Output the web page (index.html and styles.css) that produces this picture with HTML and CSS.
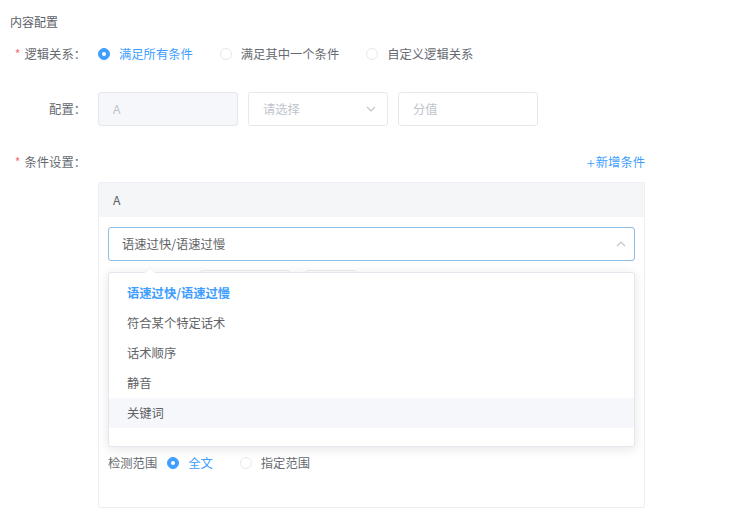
FILE: index.html
```html
<!DOCTYPE html>
<html lang="zh-CN">
<head>
<meta charset="utf-8">
<title>内容配置</title>
<link rel="stylesheet" href="styles.css">
</head>
<body>
<div class="page">
  <div class="title">内容配置</div>

  <div class="row r1">
    <div class="label"><span class="req">*</span>逻辑关系：</div>
    <div class="radios">
      <span class="radio checked"><span class="dot"></span>满足所有条件</span>
      <span class="radio"><span class="dot"></span>满足其中一个条件</span>
      <span class="radio"><span class="dot"></span>自定义逻辑关系</span>
    </div>
  </div>

  <div class="row r2">
    <div class="label">配置：</div>
    <div class="inputs">
      <div class="input disabled">A</div>
      <div class="input select">请选择
        <svg class="chev" viewBox="0 0 10 6" width="10" height="6"><path d="M1 1 L5 5 L9 1" fill="none" stroke="#c0c4cc" stroke-width="1.2"/></svg>
      </div>
      <div class="input">分值</div>
    </div>
  </div>

  <div class="row r3">
    <div class="label"><span class="req">*</span>条件设置：</div>
    <div class="cond">
      <div class="cond-head"><span class="add"><span class="plus">+</span>新增条件</span></div>
      <div class="card">
        <div class="card-head">A</div>
        <div class="card-body">
          <div class="sel-wrap">
            <div class="input select focus"><span class="val">语速过快/语速过慢</span>
              <svg class="chev" viewBox="0 0 10 6" width="10" height="6"><path d="M1 5 L5 1 L9 5" fill="none" stroke="#c0c4cc" stroke-width="1.2"/></svg>
            </div>
            <div class="dropdown">
              <span class="arrow"></span>
              <div class="opt selected">语速过快/语速过慢</div>
              <div class="opt">符合某个特定话术</div>
              <div class="opt">话术顺序</div>
              <div class="opt">静音</div>
              <div class="opt hover">关键词</div>
            </div>
          </div>
          <div class="hidden-row">
            <div class="ghost g1"></div>
            <div class="ghost g2"></div>
            <div class="ghost g3"></div>
          </div>
          <div class="scope">
            <span class="scope-label">检测范围</span>
            <span class="radio checked"><span class="dot"></span>全文</span>
            <span class="radio"><span class="dot"></span>指定范围</span>
          </div>
        </div>
      </div>
    </div>
  </div>
</div>
</body>
</html>
```

FILE: styles.css
```css
* { box-sizing: border-box; }
html, body { margin: 0; padding: 0; background: #fff; }
body {
  font-family: "Noto Sans CJK SC", "Noto Sans", "Liberation Sans", sans-serif;
  font-size: 12.3px;
  color: #666a70;
}
.page { padding: 14px 0 0 0; }
.title {
  padding-left: 10px;
  font-size: 12px;
  line-height: 16px;
  height: 16px;
  color: #5c6068;
}
.row { display: flex; align-items: flex-start; }
.label {
  width: 98px;
  flex: none;
  text-align: right;
  padding-right: 12px;
  height: 34px;
  line-height: 34px;
  color: #666a70;
}
.req { color: #f56c6c; margin-right: 4px; }
.r1 { margin-top: 7px; }
.r2 { margin-top: 21px; }
.r3 { margin-top: 19px; }

.radios { display: flex; align-items: center; height: 34px; }
.radio {
  display: inline-flex;
  align-items: center;
  margin-right: 27px;
  color: #666a70;
  white-space: nowrap;
}
.radio .dot {
  width: 12px;
  height: 12px;
  border-radius: 50%;
  border: 1px solid #e6e8ee;
  background: #fff;
  margin-right: 9px;
  position: relative;
  flex: none;
}
.radio.checked { color: #409eff; }
.radio.checked .dot { background: #409eff; border-color: #409eff; }
.radio.checked .dot::after {
  content: "";
  position: absolute;
  left: 50%; top: 50%;
  width: 4px; height: 4px;
  margin: -2px 0 0 -2px;
  border-radius: 50%;
  background: #fff;
}

.inputs { display: flex; gap: 10px; }
.input {
  width: 140px;
  height: 34px;
  border: 1px solid #e6e8ee;
  border-radius: 3px;
  padding: 0 14px;
  line-height: 32px;
  color: #c0c4cc;
  background: #fff;
  display: flex;
  align-items: center;
}
.input.disabled { background: #f5f7fa; color: #c0c4cc; }
.input.select { justify-content: space-between; padding-right: 11px; }

.cond { width: 547px; }
.cond-head {
  height: 34px;
  display: flex;
  justify-content: flex-end;
  align-items: center;
}
.add { color: #409eff; display: inline-flex; align-items: center; }
.plus { font-size: 15px; font-weight: 300; margin-right: 1px; line-height: 1; }

.card {
  margin-top: 3px;
  border: 1px solid #ebeef5;
  border-radius: 2px;
  height: 326px;
}
.card-head {
  height: 34px;
  background: #f5f6f8;
  line-height: 34px;
  padding-left: 14px;
  color: #606266;
}
.card-body { padding: 10px 9px 0 9px; }
.sel-wrap { position: relative; }
.input.focus {
  width: 527px;
  border-color: #8fbde3;
  color: #606266;
  padding-left: 13px;
  padding-right: 8px;
}
.dropdown {
  position: absolute;
  left: 0;
  top: calc(100% + 11px);
  width: 527px;
  height: 175px;
  background: #fff;
  border: 1px solid #e4e7ed;
  border-radius: 3px;
  box-shadow: 0 2px 12px rgba(0, 0, 0, 0.1);
  padding: 5px 0;
  z-index: 5;
}
.arrow {
  position: absolute;
  top: -6px;
  left: 35px;
  width: 0; height: 0;
  border-left: 6px solid transparent;
  border-right: 6px solid transparent;
  border-bottom: 6px solid #ebeef5;
}
.arrow::after {
  content: "";
  position: absolute;
  left: -5px; top: 1px;
  border-left: 5px solid transparent;
  border-right: 5px solid transparent;
  border-bottom: 5px solid #fff;
}
.opt {
  height: 30px;
  line-height: 30px;
  padding-left: 18px;
  color: #606266;
}
.opt.selected { color: #409eff; font-weight: 700; }
.opt.hover { background: #f5f7fa; }

.hidden-row { display: flex; margin-top: 9px; height: 32px; gap: 12px; }
.ghost { border: 1px solid #eceef2; border-radius: 3px; height: 32px; }
.g1 { width: 80px; border-color: transparent; }
.g2 { width: 90px; }
.g3 { width: 52px; margin-left: 3px; }

.scope { display: flex; align-items: center; height: 20px; margin-top: 151px; }
.scope-label { margin-right: 10px; color: #666a70; }
```
